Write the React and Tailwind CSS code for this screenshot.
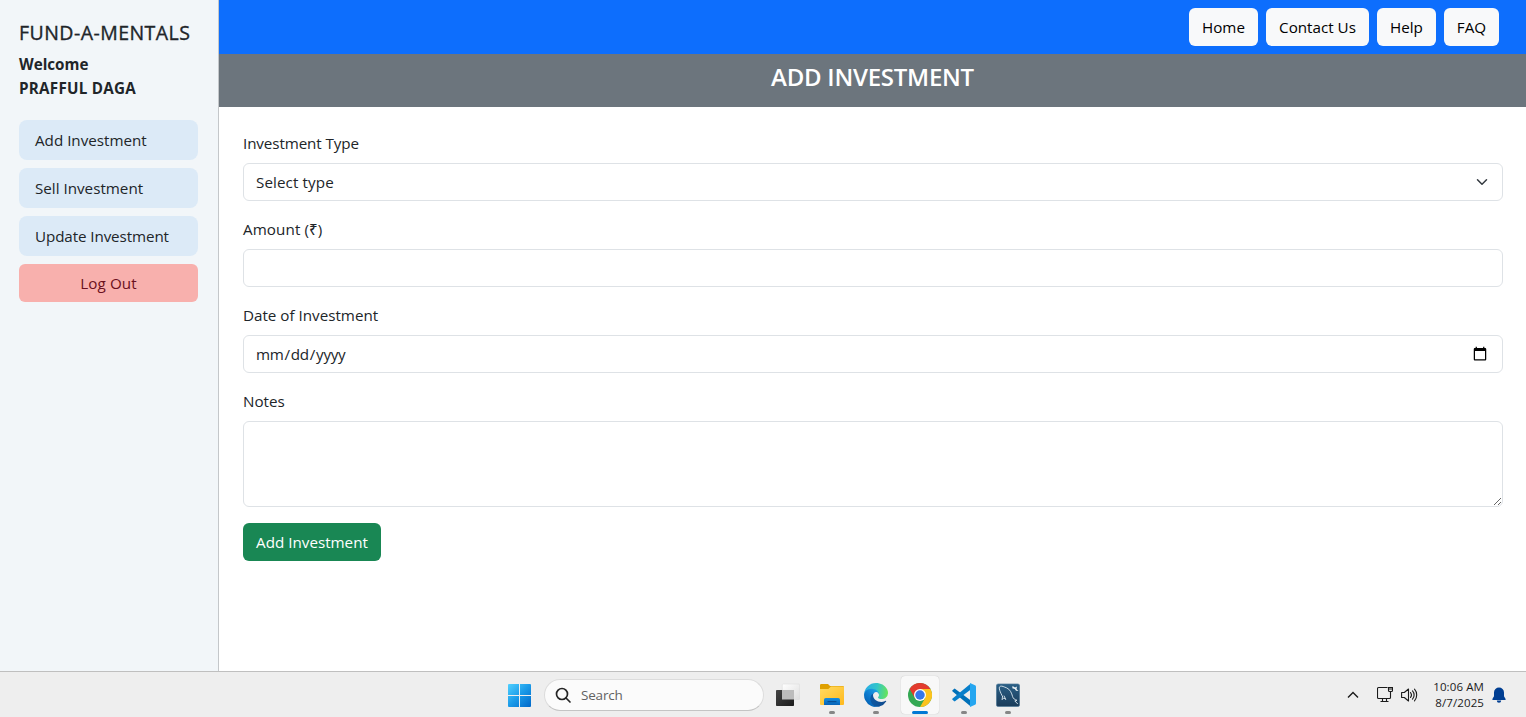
import React from "react";

const field =
  "block w-full rounded-[6px] border border-[#dee2e6] bg-white px-3 leading-6 text-[#212529] outline-none";

function SideLink({ children, className = "" }) {
  return (
    <a href="#" className={`flex h-10 items-center rounded-lg bg-[#dceaf7] px-4 pt-px whitespace-nowrap text-[#212529] ${className}`}>
      {children}
    </a>
  );
}

function NavButton({ children, className }) {
  return (
    <button className={`h-[38px] rounded-[6px] bg-[#f8f9fa] pt-px text-center whitespace-nowrap text-black ${className}`}>
      {children}
    </button>
  );
}

function Label({ children, className = "" }) {
  return (
    <label className="mb-2 flex h-6 items-center pt-px">
      <span className={`whitespace-nowrap ${className}`}>{children}</span>
    </label>
  );
}

function TaskItem({ children, state = "open" }) {
  return (
    <div className={`relative flex h-[38px] w-[38px] justify-center rounded-[4px] pt-[7px] ${state === "active" ? "bg-[#f8f8f8] shadow-[0_0_1px_rgba(0,0,0,0.25)]" : ""}`}>
      {children}
      {state === "open" && <span className="absolute bottom-0 left-4 h-[3px] w-[6px] rounded-full bg-[#868686]" />}
      {state === "active" && <span className="absolute bottom-0 left-[11px] h-[3px] w-4 rounded-full bg-[#0078d4]" />}
    </div>
  );
}

function WindowsLogo() {
  return (
    <svg width="23" height="23" viewBox="0 0 23 23">
      <defs>
        <linearGradient id="win" x1="0" y1="0" x2="23" y2="23" gradientUnits="userSpaceOnUse">
          <stop offset="0" stopColor="#4fd0ff" />
          <stop offset="0.5" stopColor="#1a9ae8" />
          <stop offset="1" stopColor="#0067c8" />
        </linearGradient>
      </defs>
      <path fill="url(#win)" d="M1 0h10v11H0V1a1 1 0 0 1 1-1zM12 0h10a1 1 0 0 1 1 1v10H12zM0 12h11v11H1a1 1 0 0 1-1-1zM12 12h11v10a1 1 0 0 1-1 1H12z" />
    </svg>
  );
}

function TaskView() {
  return (
    <svg width="24" height="24" viewBox="0 0 24 24">
      <defs>
        <linearGradient id="tvd" x1="0" y1="0" x2="1" y2="1">
          <stop offset="0" stopColor="#444" />
          <stop offset="1" stopColor="#1c1c1c" />
        </linearGradient>
        <linearGradient id="tvl" x1="0" y1="0" x2="1" y2="1">
          <stop offset="0" stopColor="#fff" />
          <stop offset="1" stopColor="#dedede" />
        </linearGradient>
      </defs>
      <rect x="6.3" y="1" width="17.4" height="15.5" rx="0.8" fill="url(#tvl)" stroke="#d8d8d8" strokeWidth="0.5" />
      <rect x="0" y="7" width="18" height="16" rx="0.8" fill="url(#tvd)" />
      <path d="M6 7h12v9.5H6z" fill="#bcbcbc" />
    </svg>
  );
}

function Explorer() {
  return (
    <svg width="24" height="24" viewBox="0 0 24 24">
      <defs>
        <linearGradient id="fold" x1="0" y1="0" x2="1" y2="1">
          <stop offset="0" stopColor="#ffdb62" />
          <stop offset="1" stopColor="#ffb91d" />
        </linearGradient>
        <linearGradient id="foldb" x1="0" y1="0" x2="0" y2="1">
          <stop offset="0" stopColor="#168ee0" />
          <stop offset="1" stopColor="#0563b8" />
        </linearGradient>
      </defs>
      <path d="M0 2.2A1.2 1.2 0 0 1 1.2 1H8l2 2h12.8A1.2 1.2 0 0 1 24 4.2V10H0z" fill="#dfa000" />
      <path d="M0 6h8.3L11 3.6h12A1 1 0 0 1 24 4.6V21a1 1 0 0 1-1 1H1a1 1 0 0 1-1-1z" fill="url(#fold)" />
      <path d="M4 22v-5.2A1.8 1.8 0 0 1 5.800 15h12.400A1.800 1.800 0 0 1 20 16.800V22z" fill="url(#foldb)" />
      <path d="M8 18.700h8" stroke="#064f96" strokeWidth="1.200" strokeLinecap="round" />
    </svg>
  );
}

function Edge() {
  return (
    <svg width="24" height="24" viewBox="0 0 256 256">
      <defs>
        <linearGradient id="e1" x1="63" y1="177" x2="241" y2="177" gradientUnits="userSpaceOnUse">
          <stop offset="0" stopColor="#0c59a4" />
          <stop offset="1" stopColor="#114a8b" />
        </linearGradient>
        <linearGradient id="e2" x1="153" y1="100" x2="46" y2="216" gradientUnits="userSpaceOnUse">
          <stop offset="0" stopColor="#1b9de2" />
          <stop offset="0.5" stopColor="#0f7fd2" />
          <stop offset="1" stopColor="#0567ba" />
        </linearGradient>
        <linearGradient id="e3" x1="10" y1="70" x2="250" y2="110" gradientUnits="userSpaceOnUse">
          <stop offset="0" stopColor="#2aaee5" />
          <stop offset="0.500" stopColor="#32c5c9" />
          <stop offset="1" stopColor="#66e45a" />
        </linearGradient>
      </defs>
      <path fill="url(#e1)" d="M231 190.500c-3.400 1.800-6.900 3.400-10.500 4.700a101.900 101.900 0 0 1-35.900 6.500c-47.300 0-88.500-32.500-88.500-74.300a31.500 31.500 0 0 1 16.400-27.300c-42.800 1.800-53.800 46.400-53.800 72.500 0 73.900 68.100 81.400 82.800 81.400 7.900 0 19.800-2.300 27-4.600l1.300-.4a128.300 128.300 0 0 0 66.600-52.800 4 4 0 0 0-5.400-5.700z" />
      <path fill="url(#e2)" d="M105.700 241.400a79.200 79.200 0 0 1-22.700-21.300 80.700 80.700 0 0 1 29.500-120c3.200-1.500 8.500-4.100 15.600-4a32.400 32.400 0 0 1 25.700 13 31.900 31.900 0 0 1 6.300 18.700c0-.2 24.500-79.600-80-79.600-43.900 0-80 41.600-80 78.200a130.200 130.200 0 0 0 12.100 56 128 128 0 0 0 156.400 67 75.500 75.500 0 0 1-62.800-8z" />
      <path fill="url(#e3)" d="M152.300 148.900c-.8 1-3.300 2.500-3.300 5.700 0 2.600 1.700 5.100 4.700 7.200 14.400 10 41.500 8.700 41.600 8.700a59.600 59.600 0 0 0 30.300-8.300A61.400 61.400 0 0 0 256 109.200c.3-22.400-8-37.300-11.300-43.900C223.500 23.900 177.700 0 128 0A128 128 0 0 0 0 126.200c.5-36.500 36.800-66 80-66 3.500 0 23.500.3 42 10 16.300 8.600 24.900 18.900 30.800 29.200 6.200 10.700 7.300 24.100 7.300 29.500 0 5.300-2.700 13.300-7.800 20z" />
    </svg>
  );
}

function Chrome() {
  return (
    <svg width="24" height="24" viewBox="0 0 48 48">
      <circle cx="24" cy="24" r="24" fill="#34a853" />
      <path d="M24 12h20.800A24 24 0 0 1 24 48l10.400-18z" fill="#fcc31e" />
      <path d="M3.200 12A24 24 0 0 1 44.800 12H24L13.600 30z" fill="#e33b2e" />
      <circle cx="24" cy="24" r="12" fill="#fff" />
      <circle cx="24" cy="24" r="9.500" fill="#3477ea" />
    </svg>
  );
}

function VSCode() {
  return (
    <svg width="24" height="24" viewBox="0 0 24 24">
      <path d="M.5 7.200 2 5.900a1 1 0 0 1 1.300 0L18.500 17.300v5.900L.6 8.500a.9.900 0 0 1-.1-1.300z" fill="#0070b8" />
      <path d="M.5 16.800 2 18.100a1 1 0 0 0 1.300 0L18.500 6.700V.8L.6 15.500a.9.900 0 0 0-.1 1.300z" fill="#087fca" />
      <path d="M18 0l5 2.300a1.600 1.600 0 0 1 1 1.500v16.400a1.600 1.600 0 0 1-1 1.500L18 24z" fill="#25a6f0" />
    </svg>
  );
}

function Workbench() {
  return (
    <svg width="24" height="24" viewBox="0 0 24 24">
      <defs>
        <linearGradient id="wb" x1="0" y1="0" x2="0" y2="1">
          <stop offset="0" stopColor="#2a5f86" />
          <stop offset="1" stopColor="#1b3c5a" />
        </linearGradient>
      </defs>
      <rect x="0.400" y="1" width="23.200" height="22.600" rx="1.800" fill="url(#wb)" stroke="#4d7796" strokeWidth="0.700" />
      <g fill="none" stroke="#dce8ef" strokeWidth="0.900" strokeLinecap="round" strokeLinejoin="round">
        <path d="M6.500 13.500C4.500 9.500 1.800 4.300 4.300 3.300c2-.6 3.500.6 6.200 1.500 3.500 1.300 5.300 5.500 6 8.500.6 2.500 2.300 3.300 4.500 4l-2.200.6 2.700 2.800" />
        <path d="m6.500 13.500-.4 3.200 1.700-1.800 2 1.600-1.700-3.500" />
      </g>
      <path d="m16.500 3 2.500 1.500 2-1-.5 2.500 2 2-2.500-.2-1.200-1.800-2.500-.7z" fill="#edf3f6" />
    </svg>
  );
}

function Taskbar() {
  return (
    <footer className="flex h-[46px] shrink-0 border-t border-[#bfbfbf] bg-[#eeeeee]">
      <div className="flex flex-1 items-start pt-1 pl-[508px]">
        <div className="pt-2">
          <WindowsLogo />
        </div>
        <div className="mt-[3px] ml-[13px] flex h-8 w-[220px] items-center rounded-full border border-[#dcdcdc] border-b-[#c4c4c4] bg-[#fbfbfb] pl-[10px]">
          <svg width="17" height="17" viewBox="0 0 17 17" fill="none" stroke="#252525" strokeWidth="1.700" strokeLinecap="round">
            <circle cx="7" cy="7" r="5.500" />
            <path d="m11 11 4 4" />
          </svg>
          <span className="ml-[9px] text-[13.500px] leading-5 tracking-[-0.2px] text-[#626262]">Search</span>
        </div>
        <div className="ml-[5px] flex gap-[6px]">
          <TaskItem state="none"><TaskView /></TaskItem>
          <TaskItem><Explorer /></TaskItem>
          <TaskItem><Edge /></TaskItem>
          <TaskItem state="active"><Chrome /></TaskItem>
          <TaskItem><VSCode /></TaskItem>
          <TaskItem><Workbench /></TaskItem>
        </div>
      </div>
      <div className="flex h-[45px] items-center pr-5 text-[#1b1b1b]">
        <svg className="mr-[18px]" width="12" height="8" viewBox="0 0 12 8" fill="none" stroke="currentColor" strokeWidth="1.400">
          <path d="m1 6.500 5-5 5 5" />
        </svg>
        <svg className="mr-2" width="16" height="17" viewBox="0 0 16 17" fill="none" stroke="currentColor" strokeWidth="1.100">
          <path d="M10.500 1.500H1.500a1 1 0 0 0-1 1v9a1 1 0 0 0 1 1h11a1 1 0 0 0 1-1V7M5.500 12.500v3M9.500 12.500v3M3.500 15.500h8M13.500 5v4M11.500 1.500h4v3a1 1 0 0 1-1 1h-2a1 1 0 0 1-1-1zM11.500 3h4" />
        </svg>
        <svg className="mr-[14px]" width="17" height="16" viewBox="0 0 17 16" fill="none" stroke="currentColor" strokeWidth="1.100" strokeLinejoin="round">
          <path d="M.6 5.500h2.700L7.500 2v12l-4.200-3.500H.6z" />
          <path d="M9.500 5.500a4 4 0 0 1 0 5M11.500 3.800a6.300 6.300 0 0 1 0 8.400M13.500 2.200a8.700 8.700 0 0 1 0 11.600" strokeLinecap="round" />
        </svg>
        <div className="mr-2 flex w-[52px] flex-col items-end text-[11.5px] leading-4 whitespace-nowrap">
          <span className="tracking-[0.1px]">10:06 AM</span>
          <span className="tracking-[0.1px]">8/7/2025</span>
        </div>
        <svg width="14" height="16" viewBox="0 0 14 16" fill="#003e92">
          <path d="M7 .5A5 5 0 0 0 2 5.500v3.700L.4 12a.7.700 0 0 0 .6 1h12a.7.700 0 0 0 .6-1L12 9.200V5.500a5 5 0 0 0-5-5zM4.800 13.500a2.200 2.200 0 0 0 4.400 0z" />
        </svg>
      </div>
    </footer>
  );
}

export default function App() {
  return (
    <div className="flex h-[717px] w-[1526px] flex-col overflow-hidden bg-white font-['Open_Sans','Noto_Sans',sans-serif] text-[15.2px] text-[#212529]">
      <div className="flex h-[671px]">
        <aside className="w-[219px] shrink-0 border-r border-[#c4c7ca] bg-[#f2f6f9] pt-[21px] pr-5 pl-[19px]">
          <h1 className="text-[19.5px] leading-6 font-medium tracking-[0.45px] whitespace-nowrap [-webkit-text-stroke:0.35px_#212529]">FUND-A-MENTALS</h1>
          <p className="mt-[7px] mb-5 leading-6 font-bold whitespace-nowrap">
            <span>Welcome</span>
            <br />
            <span className="tracking-[0.25px]">PRAFFUL DAGA</span>
          </p>
          <nav className="flex flex-col gap-2">
            <SideLink>Add Investment</SideLink>
            <SideLink>Sell Investment</SideLink>
            <SideLink className="tracking-[-0.1px]">Update Investment</SideLink>
            <button className="h-[38px] rounded-[6px] bg-[#f8b0ad] pt-px text-center tracking-[0.1px] text-[#6b1020]">Log Out</button>
          </nav>
        </aside>
        <main className="flex-1">
          <header className="flex h-[54px] items-start justify-end gap-2 bg-[#0d6efd] pt-2 pr-[27px]">
            <NavButton className="w-[69px]">Home</NavButton>
            <NavButton className="w-[103px]">Contact Us</NavButton>
            <NavButton className="w-[59px]">Help</NavButton>
            <NavButton className="w-[55px]">FAQ</NavButton>
          </header>
          <div className="h-[53px] bg-[#6c757d] pt-2 text-center">
            <h2 className="text-[24px] leading-[30px] font-semibold tracking-[-0.25px] text-white">ADD INVESTMENT</h2>
          </div>
          <form className="pt-6 pr-[23px] pl-6" onSubmit={(e) => e.preventDefault()}>
            <Label className="tracking-[-0.1px]">Investment Type</Label>
            <div className="relative mb-4">
              <select className={`${field} h-[38px] appearance-none pb-px text-[15.2px] tracking-[0.1px]`}>
                <option>Select type</option>
              </select>
              <svg className="pointer-events-none absolute top-[13px] right-[15px]" width="12" height="12" viewBox="0 0 16 16" fill="none" stroke="#343a40" strokeWidth="2" strokeLinecap="round" strokeLinejoin="round">
                <path d="m2 5 6 6 6-6" />
              </svg>
            </div>
            <Label className="tracking-[0.1px]">Amount (₹)</Label>
            <input className={`${field} mb-4 h-[38px] text-[15.2px]`} />
            <Label>Date of Investment</Label>
            <input type="date" className={`${field} mb-4 h-[38px] pl-[11px] text-base tracking-[-0.2px] [&::-webkit-datetime-edit]:text-[15.2px] [&::-webkit-datetime-edit]:tracking-[-0.3px]`} />
            <Label>Notes</Label>
            <textarea className={`${field} h-[86px] py-[6px] text-[15.2px]`} />
            <button className="mt-4 h-[38px] w-[138px] rounded-[6px] bg-[#198754] pt-px whitespace-nowrap text-white">Add Investment</button>
          </form>
        </main>
      </div>
      <Taskbar />
    </div>
  );
}
